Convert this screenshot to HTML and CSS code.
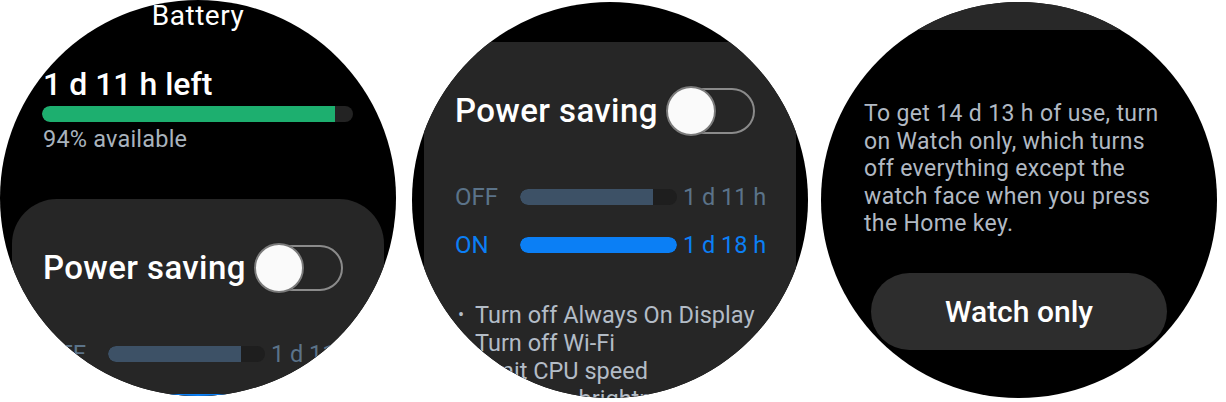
FILE: index.html
```html
<!DOCTYPE html>
<html lang="en">
<head>
<meta charset="utf-8">
<title>Battery</title>
<link rel="stylesheet" href="styles.css">
</head>
<body>
<main class="strip">
  <section class="watch watch-battery">
    <h1 class="title">Battery</h1>
    <div class="summary">
      <div class="remaining">1 d 11 h left</div>
      <div class="level"><div class="level-fill" style="width:94.2%"></div></div>
      <div class="avail">94% available</div>
    </div>
    <div class="card">
      <div class="ps-row">
        <span class="ps-label">Power saving</span>
        <span class="switch"><span class="knob"></span></span>
      </div>
      <div class="cmp-row cmp-off">
        <span class="cmp-label">OFF</span>
        <span class="cmp-bar"><span class="cmp-fill" style="width:85%"></span></span>
        <span class="cmp-time">1 d 11 h</span>
      </div>
      <div class="cmp-row cmp-on">
        <span class="cmp-label">ON</span>
        <span class="cmp-bar"><span class="cmp-fill" style="width:100%"></span></span>
        <span class="cmp-time">1 d 18 h</span>
      </div>
      <ul class="bullets">
        <li>Turn off Always On Display</li>
        <li>Turn off Wi-Fi</li>
        <li>Limit CPU speed</li>
        <li>Decrease brightness</li>
      </ul>
    </div>
  </section>

  <section class="watch watch-saving">
    <div class="card card-scrolled">
      <div class="ps-row">
        <span class="ps-label">Power saving</span>
        <span class="switch"><span class="knob"></span></span>
      </div>
      <div class="cmp-row cmp-off">
        <span class="cmp-label">OFF</span>
        <span class="cmp-bar"><span class="cmp-fill" style="width:85%"></span></span>
        <span class="cmp-time">1 d 11 h</span>
      </div>
      <div class="cmp-row cmp-on">
        <span class="cmp-label">ON</span>
        <span class="cmp-bar"><span class="cmp-fill" style="width:100%"></span></span>
        <span class="cmp-time">1 d 18 h</span>
      </div>
      <ul class="bullets">
        <li>Turn off Always On Display</li>
        <li>Turn off Wi-Fi</li>
        <li>Limit CPU speed</li>
        <li>Decrease brightness</li>
      </ul>
    </div>
  </section>

  <section class="watch watch-only">
    <div class="band"></div>
    <p class="info">To get 14 d 13 h of use, turn on Watch only, which turns off everything except the watch face when you press the Home key.</p>
    <button class="btn" type="button">Watch only</button>
  </section>
</main>
</body>
</html>
```

FILE: styles.css
```css
* { box-sizing: border-box; }

html, body {
  margin: 0;
  padding: 0;
  background: #ffffff;
}

body {
  font-family: Roboto, "Liberation Sans", Arial, sans-serif;
  width: 1226px;
  height: 402px;
  overflow: hidden;
}

.strip {
  display: flex;
  align-items: flex-start;
}

.watch {
  width: 396px;
  height: 396px;
  flex: none;
  border-radius: 50%;
  background: #000000;
  overflow: hidden;
  display: flex;
  flex-direction: column;
  color: #ffffff;
}

.watch-saving {
  margin-left: 16px;
  margin-top: 2px;
}

.watch-only {
  margin-left: 13px;
  margin-top: 2px;
}

/* ---------- Screen 1 ---------- */
.title {
  margin: 0;
  font-size: 28px;
  line-height: 32px;
  font-weight: 400;
  text-align: center;
  letter-spacing: 0.5px;
}

.summary {
  margin-top: 33px;
  padding-left: 42px;
}

.remaining {
  font-size: 32px;
  line-height: 38px;
  font-weight: 500;
  padding-left: 1px;
}

.level {
  margin-top: 3px;
  width: 311px;
  height: 16px;
  border-radius: 8px;
  background: #232323;
  overflow: hidden;
}

.level-fill {
  height: 100%;
  background: #1daf6f;
  border-radius: 8px 0 0 8px;
}

.avail {
  margin-top: 3px;
  padding-left: 1px;
  font-size: 23.5px;
  line-height: 28px;
  color: #a9b3bd;
  letter-spacing: 0.2px;
}

/* ---------- Power saving card ---------- */
.card {
  margin: 46px 12px 0 12px;
  padding: 44px 41px 30px 31px;
  background: #262626;
  border-radius: 45px 45px 0 0;
  flex: none;
}

.card-scrolled {
  margin-top: 40px;
}

.ps-row {
  display: flex;
  align-items: center;
  justify-content: space-between;
  height: 50px;
}

.ps-label {
  font-size: 33px;
  line-height: 40px;
  font-weight: 500;
  letter-spacing: 0.4px;
  color: #ffffff;
  white-space: nowrap;
}

.switch {
  position: relative;
  width: 88px;
  height: 46px;
  border: 2px solid #8b8b8b;
  border-radius: 23px;
  flex: none;
}

.knob {
  position: absolute;
  left: -3px;
  top: -4px;
  width: 50px;
  height: 50px;
  border-radius: 50%;
  background: #fafafa;
  border: 2px solid #7a7a7a;
  box-shadow: 0 0 1px rgba(0, 0, 0, 0.6);
}

.cmp-row {
  display: grid;
  grid-template-columns: 65px 157px auto;
  align-items: center;
  height: 24px;
  font-size: 24px;
  line-height: 24px;
  white-space: nowrap;
}

.cmp-off {
  margin-top: 49px;
  color: #5b7389;
}

.cmp-on {
  margin-top: 24px;
  color: #0b7ff5;
}

.cmp-bar {
  display: block;
  height: 16px;
  border-radius: 8px;
  background: #1e1e1e;
  overflow: hidden;
}

.cmp-fill {
  display: block;
  height: 100%;
  border-radius: 8px 0 0 8px;
}

.cmp-off .cmp-fill { background: #3d5166; }
.cmp-on .cmp-fill { background: #0b7ff5; border-radius: 8px; }

.cmp-time {
  padding-left: 6px;
  font-size: 23.5px;
}

.bullets {
  list-style: none;
  margin: 44px 0 0 3px;
  padding: 0;
  font-size: 23.5px;
  line-height: 28px;
  color: #b3bcc6;
}

.bullets li {
  display: flex;
  white-space: nowrap;
}

.bullets li::before {
  content: "\2022";
  flex: none;
  width: 17px;
  font-size: 18px;
}

/* ---------- Screen 3 ---------- */
.band {
  height: 28px;
  flex: none;
  background: #282828;
}

.info {
  margin: 70px 0 0 0;
  padding-left: 43px;
  width: 345px;
  font-size: 23px;
  line-height: 27.6px;
  letter-spacing: 0.35px;
  color: #b1b9c3;
}

.btn {
  display: block;
  margin: 35px 0 0 50px;
  width: 296px;
  height: 77px;
  flex: none;
  border: none;
  border-radius: 39px;
  background: #2d2d2d;
  color: #ffffff;
  font-family: Roboto, "Liberation Sans", Arial, sans-serif;
  font-size: 30px;
  font-weight: 500;
  padding: 0;
}
```
